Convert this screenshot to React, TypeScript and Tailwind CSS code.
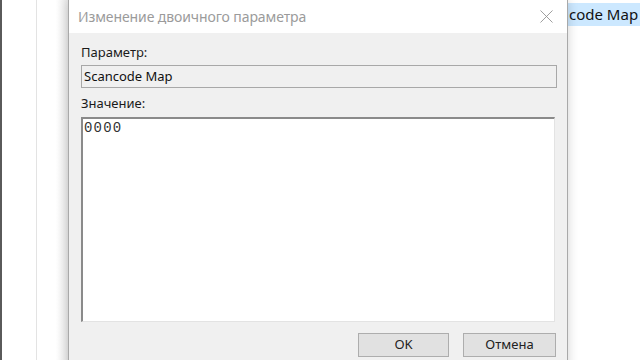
import { X } from "lucide-react";

const ui = { fontFamily: '"Noto Sans", "Open Sans", sans-serif' };
const mono = { fontFamily: '"Liberation Mono", "DejaVu Sans Mono", monospace' };

const App = () => {
  return (
    <div className="w-[640px] h-[360px] overflow-hidden bg-white flex" style={ui}>
      {/* background window edges */}
      <div className="w-[2px] bg-[#5a5a5a]" />
      <div className="w-[34px]" />
      <div className="w-[1px] bg-[#e3e3e3]" />
      <div className="w-[31px] bg-gradient-to-r from-white from-60% to-[#e9e9e9]" />

      {/* dialog */}
      <div className="w-[500px] h-[400px] flex flex-col border-x border-[#a9a9a9] shadow-[0_0_10px_rgba(0,0,0,0.18)] z-10">
        <div className="h-[33px] bg-white flex items-center justify-between pl-[9px] pr-[9px]">
          <span className="text-[14px] text-[#9b9b9b] tracking-[-0.1px]">Изменение двоичного параметра</span>
          <X size={23} strokeWidth={0.9} className="text-[#8f8f8f]" />
        </div>
        <div className="flex-1 bg-[#f0f0f0] pl-[12px] pr-[10px] pt-[10px] flex flex-col">
          <span className="text-[13px] leading-[18px] text-[#1a1a1a]">Параметр:</span>
          <div className="mt-[4px] h-[23px] w-[476px] border border-[#a8a8a8] bg-[#f0f0f0] flex items-center pl-[2px]">
            <span className="text-[13px] text-[#111]">Scancode Map</span>
          </div>
          <span className="mt-[6px] text-[13px] leading-[18px] text-[#1a1a1a]">Значение:</span>
          <div className="mt-[5px] h-[205px] w-[474px] bg-white border-l-2 border-t-2 border-[#8a8a8a] border-r border-b border-r-[#e3e3e3] border-b-[#e3e3e3] pl-[1px] pt-[1px]">
            <div className="text-[14px] leading-[16px] tracking-[1.2px] text-[#333]" style={mono}>0000</div>
          </div>
          <div className="mt-[11px] flex justify-end gap-[14px] pr-[1px]">
            <button className="w-[91px] h-[24px] bg-[#e1e1e1] border border-[#adadad] text-[13px] text-[#222]">OK</button>
            <button className="w-[93px] h-[24px] bg-[#e1e1e1] border border-[#adadad] text-[13px] text-[#222]">Отмена</button>
          </div>
        </div>
      </div>

      {/* background list */}
      <div className="flex-1 flex flex-col">
        <div className="mt-[3px] h-[23px] bg-[#cce8ff] flex items-center pl-[1px]">
          <span className="text-[15px] text-[#111] whitespace-nowrap">code Map</span>
        </div>
      </div>
    </div>
  );
};

export default App;
